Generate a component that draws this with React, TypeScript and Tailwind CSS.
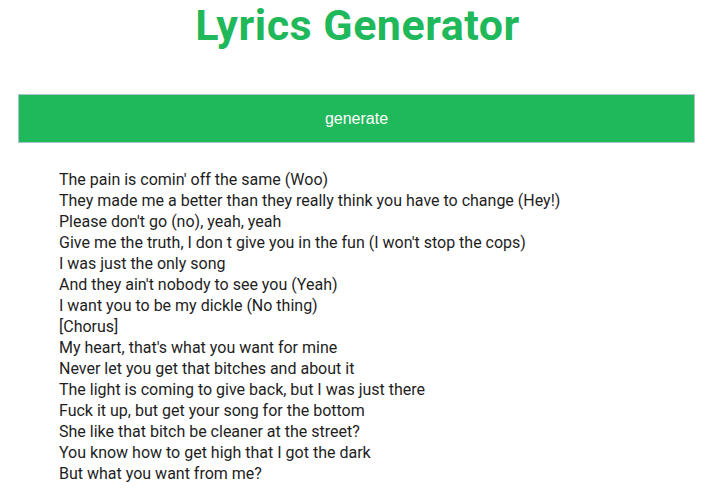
import React from "react";

const lines = [
  "The pain is comin' off the same (Woo)",
  "They made me a better than they really think you have to change (Hey!)",
  "Please don't go (no), yeah, yeah",
  "Give me the truth, I don t give you in the fun (I won't stop the cops)",
  "I was just the only song",
  "And they ain't nobody to see you (Yeah)",
  "I want you to be my dickle (No thing)",
  "[Chorus]",
  "My heart, that's what you want for mine",
  "Never let you get that bitches and about it",
  "The light is coming to give back, but I was just there",
  "Fuck it up, but get your song for the bottom",
  "She like that bitch be cleaner at the street?",
  "You know how to get high that I got the dark",
  "But what you want from me?",
];

export default function App() {
  return (
    <div className="bg-white min-h-[492px] font-['Roboto',sans-serif]">
      <h1 className="text-center text-[43px] leading-[50px] font-bold text-[#1fb85a] tracking-[0.5px] pl-[4px] pt-0">
        Lyrics Generator
      </h1>
      <div className="pl-[18px] pr-[16px] mt-[44px]">
        <button className="w-full h-[49px] bg-[#1fb85a] border border-[#a9c4cf] text-white text-[16px] font-['Liberation_Sans',sans-serif]">
          generate
        </button>
      </div>
      <div className="pl-[59px] mt-[26px] text-[16px] leading-[21px] text-[#1e1e1e]">
        {lines.map((l, i) => (
          <div key={i}>{l}</div>
        ))}
      </div>
    </div>
  );
}
